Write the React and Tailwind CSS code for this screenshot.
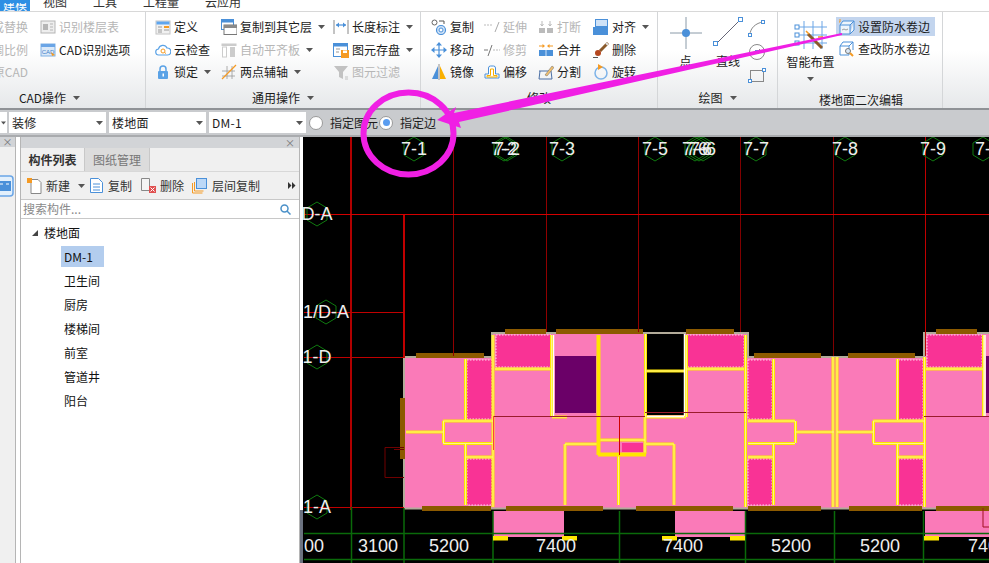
import React from "react";

const BLUE = "#4a90d9";
const ORANGE = "#f59a23";
const GRAY = "#b5b5b5";

const icons = {
  replace: <><rect x="1" y="2" width="14" height="12" fill="#eee" stroke={GRAY} /><rect x="3" y="5" width="5" height="6" fill={GRAY} /><path d="M10 5h3M10 8h3M10 11h3" stroke={GRAY} /></>,
  cadOption: <><rect x="1" y="2" width="14" height="12" fill="#dbe9f8" stroke="#7fb0e4" /><rect x="1" y="2" width="14" height="3" fill="#6aa5e6" /><text x="8" y="12" fontSize="6" textAnchor="middle" fill="#3f7fc8" fontFamily="Liberation Sans">CAD</text><path d="M11 10l4 3-3 1z" fill={ORANGE} /></>,
  define: <><rect x="1" y="2" width="14" height="13" fill="#f1f1f1" stroke="#c4c4c4" /><rect x="1.5" y="2.5" width="13" height="3" fill="#5ea5ee" /><rect x="9" y="7" width="5" height="2" fill={ORANGE} /><path d="M3 8h4M3 11h4M9 11h5M3 13h4" stroke="#999" /></>,
  cloud: <><path d="M4 13a3 3 0 0 1-.5-6 4.5 4.5 0 0 1 8.500-1 3.500 3.500 0 0 1 .5 7z" fill="#fff" stroke="#5aa2e6" strokeWidth="1.2" /><circle cx="8" cy="9" r="2" fill="none" stroke={ORANGE} /><path d="M9.500 10.500l1.500 1" stroke={ORANGE} /></>,
  lock: <><path d="M5 7V5a3 3 0 0 1 6 0v2" fill="none" stroke="#5aa2e6" strokeWidth="1.500" /><rect x="3" y="7" width="10" height="8" rx="1" fill="#5aa2e6" /><rect x="7.500" y="9.500" width="1.500" height="3" fill="#fff" /></>,
  copyFloor: <><rect x="0.500" y="0.500" width="12" height="10" fill="#fff" stroke="#4a90d9" /><rect x="0.500" y="0.500" width="12" height="3" fill="#4a90d9" /><rect x="3" y="6" width="13" height="9.500" fill="#fff" stroke="#777" /><rect x="3" y="6" width="13" height="3" fill="#8a8a8a" /></>,
  autoAlign: <><rect x="0.500" y="1.500" width="15" height="2.500" fill="#ccc" /><rect x="1.500" y="5" width="4" height="10" fill="#fff" stroke="#ccc" /><rect x="9" y="5" width="5" height="10" fill="#ccc" /></>,
  twoPoint: <><path d="M1 7h13M1 12h13M6 2v13M11 2v13" stroke="#999" strokeWidth="0.800" /><path d="M1 15L15 1" stroke={ORANGE} strokeWidth="1.200" /></>,
  length: <><path d="M1 1v14M15 1v14" stroke="#888" /><path d="M3 6h10" stroke={BLUE} strokeWidth="1.200" /><path d="M3 6l3-2.500v5zM13 6l-3-2.500v5z" fill={BLUE} /></>,
  save: <><rect x="0.500" y="1.500" width="14" height="13" fill="#fff" stroke={BLUE} /><rect x="0.500" y="1.500" width="14" height="3" fill={BLUE} /><path d="M3 7h4M3 10h3" stroke="#999" /><rect x="8" y="8" width="8" height="8" fill={ORANGE} /><rect x="10" y="8.500" width="4" height="2.500" fill="#fff" /></>,
  filter: <><path d="M1 2h14l-5 6v7l-4-2V8z" fill="#c2c2c2" /><path d="M12 13h3M12 15h3" stroke="#c2c2c2" /></>,
  copy: <><circle cx="3.500" cy="3.500" r="2.500" fill="#fff" stroke="#666" /><circle cx="10" cy="11" r="4.500" fill="#cfe2f7" stroke={BLUE} strokeWidth="1.200" /><circle cx="10" cy="11" r="2" fill="#fff" stroke={BLUE} /><path d="M8 2h5v3" fill="none" stroke="#555" /></>,
  extend: <><path d="M0 6h9" stroke="#bbb" strokeDasharray="2 1" /><path d="M11 13L15 3" stroke="#aaa" /></>,
  trim: <><path d="M0 8h4" stroke="#777" /><path d="M9 8h7" stroke="#bbb" strokeDasharray="2 1" /><path d="M4 14L8 3" stroke="#777" /></>,
  breakIcon: <><rect x="1" y="9" width="6" height="5" fill="#bbb" /><rect x="9" y="9" width="6" height="5" fill="#bbb" /><path d="M4 2v5M12 2v5" stroke="#bbb" /><path d="M2.500 5L4 7l1.500-2M10.500 5L12 7l1.500-2" fill="none" stroke="#bbb" /></>,
  merge: <><rect x="1" y="8" width="14" height="6" fill={BLUE} /><path d="M8 8v6" stroke="#cfe2f7" /><path d="M1 4h4M11 4h4" stroke={ORANGE} strokeWidth="1.200" /><path d="M7 4L4.500 2v4zM9 4l2.500-2v4z" fill={ORANGE} /></>,
  align: <><rect x="2.500" y="0.500" width="12" height="7" fill="#cfe2f7" stroke={BLUE} /><rect x="0" y="8" width="15" height="8" fill={BLUE} /></>,
  move: <><path d="M8 2v12M2 8h12" stroke={BLUE} strokeWidth="1.200" /><path d="M8 0l3 3.500H5zM8 16l3-3.500H5zM0 8l3.500-3v6zM16 8l-3.500-3v6z" fill={BLUE} /></>,
  erase: <><path d="M15 1L7 9" stroke="#8a5a2b" strokeWidth="3" /><path d="M13 1l2 2" stroke="#ddd" strokeWidth="2" /><circle cx="5" cy="11" r="3" fill="#b5471f" /><path d="M0 15.500h5" stroke="#555" /></>,
  mirror: <><path d="M7 2v13H1z" fill={BLUE} /><path d="M8 0v16" stroke="#777" strokeWidth="0.800" /><path d="M9 2v13h6z" fill="#f9b000" /></>,
  offset: <><path d="M1 14V10h3.500V4a2 2 0 0 1 2-2h3a2 2 0 0 1 2 2v6H15v4z" fill="#fff" stroke={BLUE} /><path d="M3 13v-1.500h3.500V5h3v6.500H13V13z" fill="none" stroke="#f9b000" /></>,
  split: <><path d="M1 7h12M2 7l-1 8h13l-1-8" fill="none" stroke="#4a6fa5" /><path d="M7 11L14 2l2 1.500L9 12z" fill="#f0c070" stroke="#666" strokeWidth="0.500" /></>,
  rotate: <><circle cx="8" cy="9" r="6" fill="none" stroke="#7db3e8" strokeWidth="1.500" /><path d="M5 0v6l5-3z" fill={ORANGE} /></>,
};

const Icon = ({ name }) => (
  <svg width="16" height="16" viewBox="0 0 16 16" className="shrink-0">
    {icons[name]}
  </svg>
);

const Caret = ({ className = "" }) => (
  <svg width="7" height="4" viewBox="0 0 7 4" className={`shrink-0 ${className}`}>
    <path d="M0 0h7L3.500 4z" fill="#555" />
  </svg>
);

const Item = ({ icon, label, caret, off, small }) => (
  <div className="flex h-[22.500px] items-center whitespace-nowrap">
    {icon && <span className={small ? "flex w-4 justify-end" : "flex"}><Icon name={icon} /></span>}
    <span className={`ml-[3px] ${off ? "text-[#b6b6b6]" : "text-[#1c1c1c]"}`}>{label}</span>
    {caret && <Caret className="ml-[6px]" />}
  </div>
);

const Group = ({ width, title, caret, children }) => (
  <div className={`flex shrink-0 flex-col border-r border-[#d4d6d8] ${width}`}>
    <div className="mt-1 flex h-[72px]">{children}</div>
    <div className="flex h-[22px] items-center justify-center gap-[7px] pt-[2px] text-[#1c1c1c]">
      {title}
      {caret && <Caret />}
    </div>
  </div>
);

const Select = ({ value, width }) => (
  <div className={`flex h-[21px] items-center justify-between bg-white pl-[3px] pr-[3px] ${width}`}>
    <span className="tracking-[0.300px] text-[#1c1c1c]">{value}</span>
    <Caret />
  </div>
);

const Radio = ({ on }) => (
  <span className="flex h-[14px] w-[14px] items-center justify-center rounded-full border border-[#9a9a9a] bg-white">
    {on && <span className="h-[7px] w-[7px] rounded-full bg-[#5a9df0]" />}
  </span>
);

const pink = "#fa7ab8";
const hot = "#f93395";

const axisLines = [
  [351, 137, 351, 510, "#b00000", 2],
  [404, 214, 404, 358, "#c00000", 2],
  [453.500, 137, 453.500, 356, "#900000", 1],
  [546.500, 137, 546.500, 332, "#900000", 1],
  [638.500, 137, 638.500, 332, "#900000", 1],
  [740.500, 137, 740.500, 332, "#800000", 1],
  [833.500, 137, 833.500, 356, "#800000", 1],
  [925.500, 137, 925.500, 356, "#c00000", 1],
  [304, 214.500, 989, 214.500, "#d40000", 1],
  [304, 312.500, 403, 312.500, "#c00000", 1],
  [304, 357.500, 404, 357.500, "#c00000", 1],
  [304, 507.500, 404, 507.500, "#c00000", 1],
];

const bubbles = [
  [414, 149, "7-1"], [504, 149, "7-2"], [507, 149, "7-2"], [562, 149, "7-3"], [655, 149, "7-5"],
  [695, 149, "7-6"], [699, 149, "7-6"], [703, 149, "7-6"], [756, 149, "7-7"], [845, 149, "7-8"],
  [933, 149, "7-9"], [983, 149, "7-"], [317, 214, "D-A"], [326, 312, "1/D-A"], [317, 357, "1-D"], [317, 507, "1-A"],
];

const hotRooms = [
  [496, 335, 55, 32], [467, 360, 25, 59], [467, 459, 25, 46], [687, 335, 57, 32], [748, 360, 24, 59],
  [748, 459, 24, 46], [898, 360, 25, 59], [898, 459, 25, 46], [927, 335, 55, 32],
];

const yellow = [
  "M406 432H443M443.500 421V443M443 421H493M443 443.500H493M465.500 359V420M465.500 443V505M466 457H493",
  "M493 335V507M495 369H552M551.500 335V416M552 417H567",
  "M599 440H645M645 417V454M618.500 455V505M565 444V505M565 444H597",
  "M645.500 334V417M646 371H684M645 417H686M686.500 335V417M687 369H744M745.500 335V507",
  "M646 444H674M674 444V505",
  "M748 421H795M795.500 421V443M748 443.500H795M795 432H834M773.500 359V420M773.500 443V505M748 457H773",
  "M833 357V507M837 357V507M837 432H874M873.500 421V443M873 421H924M873 443.500H924M897.500 359V420M897.500 443V505M897 457H924",
  "M924.500 357V507M926 369H983M983.500 335V417",
];

const brown = [
  [416, 353, 68, 5], [505, 329, 41, 5], [556, 329, 87, 5], [686, 329, 48, 5], [754, 353, 67, 5], [848, 353, 67, 5], [936, 329, 41, 5],
  [422, 506, 69, 5], [506, 506, 97, 5], [636, 506, 97, 5], [748, 506, 73, 5], [849, 506, 73, 5], [936, 506, 53, 5], [400, 398, 5, 61],
];

const Plan = () => (
  <svg viewBox="303 137 686 426" className="block h-[426px] w-[686px] bg-black">
    {/* floor slab */}
    <path d="M404 507V357H492V333H748V357H924V333H989V508H404z" fill={pink} />
    <rect x="493" y="511" width="71" height="26" fill={pink} />
    <rect x="675" y="511" width="70" height="26" fill={pink} />
    <rect x="925" y="511" width="64" height="26" fill={pink} />
    <rect x="646" y="334" width="38" height="81" fill="#000" />
    <rect x="555" y="356" width="41" height="57" fill="#6b0068" />
    <rect x="986" y="356" width="3" height="57" fill="#6b0068" />
    <rect x="622" y="443" width="21" height="9" fill={hot} />
    {hotRooms.map(([x, y, w, h]) => (
      <rect key={`${x}-${y}`} x={x} y={y} width={w} height={h} fill={hot} stroke="#ffd6ea" strokeDasharray="1.500 1.500" />
    ))}
    {/* walls */}
    <path d="M404 507V357H492V333H748V357H924V333H989M404 508.500H989" fill="none" stroke="#b3ab9a" strokeWidth="2" />
    {yellow.map((d) => (
      <path key={d} d={d} fill="none" stroke="#ffe600" strokeWidth="3" />
    ))}
    {yellow.map((d) => (
      <path key={d} d={d} fill="none" stroke="#fff58a" strokeWidth="1" />
    ))}
    <path d="M598.500 335V455M598 454.500H646" fill="none" stroke="#ffe600" strokeWidth="4" />
    <path d="M553.500 335V416M684.500 334V416M647 416.500H684M985 335V416" fill="none" stroke="#fff" strokeWidth="1.500" />
    {brown.map(([x, y, w, h]) => (
      <rect key={`${x}-${y}`} x={x} y={y} width={w} height={h} fill="#8c5a00" />
    ))}
    {/* axes */}
    {axisLines.map(([x1, y1, x2, y2, c, w]) => (
      <line key={`${x1}-${y1}-${x2}`} x1={x1} y1={y1} x2={x2} y2={y2} stroke={c} strokeWidth={w} />
    ))}
    <path d="M493 416.500H645M645 412.500H746M924 416.500H989" stroke="#9a1c2c" fill="none" />
    <path d="M619.500 416V455" stroke="#d00000" />
    <path d="M493.500 416V450" stroke="#ff4040" />
    <path d="M404 447.500H385V477.500H404M394 449.500H404" fill="none" stroke="#700000" />
    <path d="M983 508V527H989" fill="none" stroke="#a01020" />
    {/* dimension lines */}
    <path d="M304 533.500H989M304 559.500H989" stroke="#0a6a0a" strokeWidth="1.500" />
    <path d="M351.500 507V563M404 508V563M493 511V563M619.500 511V563M745.500 511V563M834.500 511V563M923.500 511V563" stroke="#0a6a0a" strokeWidth="1.500" />
    {[[493, 536], [562, 536], [662, 536], [730, 536], [924, 536]].map(([x, y]) => (
      <rect key={x} x={x} y={y} width="15" height="4.500" fill="#ffe600" />
    ))}
    {bubbles.map(([cx, cy, label], i) => (
      <g key={i}>
        <polygon
          points={`${cx},${cy - 12} ${cx + 10},${cy - 6} ${cx + 10},${cy + 6} ${cx},${cy + 12} ${cx - 10},${cy + 6} ${cx - 10},${cy - 6}`}
          fill="none"
          stroke="#0f7a0f"
        />
        <text x={cx} y={cy + 6} textAnchor="middle" fontSize="18" fill="#eee" fontFamily="Liberation Sans">{label}</text>
      </g>
    ))}
    {[[314, "00"], [378, "3100"], [449, "5200"], [556, "7400"], [683, "7400"], [791, "5200"], [880, "5200"], [988, "7400"]].map(([x, t]) => (
      <text key={x} x={x} y={552} textAnchor="middle" fontSize="18" fill="#eee" fontFamily="Liberation Sans">{t}</text>
    ))}
  </svg>
);

export default function App() {
  return (
    <div className="relative h-[563px] w-[989px] overflow-hidden bg-white text-[12px] leading-[16px] [font-family:'Noto_Sans_CJK_SC','Liberation_Sans',sans-serif]">
      {/* menu tabs */}
      <div className="flex h-[12px] overflow-hidden border-b border-[#d8d8d8]">
        <div className="flex h-[11px] w-[30px] items-end justify-end bg-[#2e8fe4] pr-[3px] leading-[12px] text-white">
          <span className="h-[8px] overflow-hidden"><span className="block -mt-[4px]">建模</span></span>
        </div>
        {[["视图", "ml-[13px]"], ["工具", "ml-[26px]"], ["工程量", "ml-[26px]"], ["云应用", "ml-[26px]"]].map(([t, m]) => (
          <span key={t} className={`${m} -mt-[4px] leading-[12px] text-[#333]`}>{t}</span>
        ))}
      </div>

      {/* ribbon */}
      <div className="flex h-[98px] border-b-2 border-[#8f9296] bg-gradient-to-b from-white from-40% to-[#e6e8ea]">
        <Group width="w-[146px]" title={<span className="-ml-[46px]">CAD操作</span>} caret>
          <div className="w-[40px]">
            {["成替换", "调比例", "原CAD"].map((t) => (
              <div key={t} className="flex h-[22.500px] w-[28px] items-center justify-end overflow-hidden whitespace-nowrap text-[#b6b6b6]">
                <span className="shrink-0">{t}</span>
              </div>
            ))}
          </div>
          <div>
            <Item icon="replace" label="识别楼层表" off />
            <Item icon="cadOption" label="CAD识别选项" />
          </div>
        </Group>

        <Group width="w-[275px]" title="通用操作" caret>
          <div className="w-[75px] pl-[9px]">
            <Item icon="define" label="定义" />
            <Item icon="cloud" label="云检查" />
            <Item icon="lock" label="锁定" caret small />
          </div>
          <div className="w-[112px]">
            <Item icon="copyFloor" label="复制到其它层" caret />
            <Item icon="autoAlign" label="自动平齐板" caret off />
            <Item icon="twoPoint" label="两点辅轴" caret />
          </div>
          <div>
            <Item icon="length" label="长度标注" caret />
            <Item icon="save" label="图元存盘" caret />
            <Item icon="filter" label="图元过滤" off />
          </div>
        </Group>

        <Group width="w-[237px]" title="修改">
          <div className="w-[63px] pl-[10px]">
            <Item icon="copy" label="复制" />
            <Item icon="move" label="移动" />
            <Item icon="mirror" label="镜像" />
          </div>
          <div className="w-[54px]">
            <Item icon="extend" label="延伸" off />
            <Item icon="trim" label="修剪" off />
            <Item icon="offset" label="偏移" />
          </div>
          <div className="w-[55px]">
            <Item icon="breakIcon" label="打断" off />
            <Item icon="merge" label="合并" />
            <Item icon="split" label="分割" />
          </div>
          <div>
            <Item icon="align" label="对齐" caret />
            <Item icon="erase" label="删除" />
            <Item icon="rotate" label="旋转" />
          </div>
        </Group>

        <Group width="w-[120px]" title="绘图" caret>
          <div className="flex w-[55px] flex-col items-center">
            <svg width="32" height="32" viewBox="0 0 32 32" className="mt-[1px]">
              <path d="M0 16h32M16 0v32" stroke="#8a9aa8" />
              <circle cx="16" cy="16" r="4" fill={BLUE} />
            </svg>
            <span className="mt-[4px] text-[#1c1c1c]">点</span>
          </div>
          <div className="flex w-[30px] flex-col items-center">
            <svg width="30" height="30" viewBox="0 0 30 30" className="mt-[1px]">
              <path d="M3 27L27 3" stroke="#667" />
              <rect x="0.500" y="24.500" width="4" height="4" fill="#fff" stroke={BLUE} />
              <rect x="25.500" y="0.500" width="4" height="4" fill="#fff" stroke={BLUE} />
            </svg>
            <span className="mt-[6px] text-[#1c1c1c]">直线</span>
          </div>
          <div className="ml-[5px] mt-[2px] flex flex-col">
            <svg width="18" height="68" viewBox="0 0 18 68">
              <path d="M2 17C2 10 8 5 15 4" fill="none" stroke="#888" />
              <rect x="0.500" y="15.500" width="3" height="3" fill="#fff" stroke={BLUE} />
              <rect x="13.500" y="2.500" width="3" height="3" fill="#fff" stroke={BLUE} />
              <circle cx="9" cy="34" r="7.500" fill="none" stroke="#888" />
              <path d="M9 34l3-3" stroke="#888" />
              <rect x="7.500" y="32.500" width="3" height="3" fill="#fff" stroke={BLUE} />
              <rect x="2.500" y="52.500" width="13" height="11" fill="none" stroke="#888" />
              <rect x="0.500" y="61.500" width="3" height="3" fill="#fff" stroke={BLUE} />
              <rect x="14.500" y="50.500" width="3" height="3" fill="#fff" stroke={BLUE} />
            </svg>
          </div>
        </Group>

        <Group width="w-[165px]" title={<span className="ml-[2px] pt-[3px]">楼地面二次编辑</span>}>
          <div className="flex w-[59px] flex-col items-center pl-[6px]">
            <svg width="34" height="32" viewBox="0 0 34 32" className="mt-[4px]">
              <path d="M10 1v28M19 1v28M28 1v28M3 7h30M3 15h30M3 23h30" stroke="#6aa5e6" />
              <path d="M14 14l14 14" stroke="#8a5a2b" strokeWidth="3" />
              <path d="M12 11l3 3M24 17h5" stroke={ORANGE} strokeWidth="1.500" />
              <rect x="1" y="5" width="4" height="4" fill="#fff" stroke={BLUE} />
              <rect x="1" y="13" width="4" height="4" fill="#fff" stroke={BLUE} />
              <rect x="1" y="21" width="4" height="4" fill="#fff" stroke={BLUE} />
            </svg>
            <span className="mt-[2px] whitespace-nowrap text-[#1c1c1c]">智能布置</span>
            <Caret className="mt-[7px]" />
          </div>
          <div>
            <div className="-ml-[1px] mt-[1px] flex h-[19px] w-[99px] items-center whitespace-nowrap bg-[#c3d5ee] pl-[3px]">
              <svg width="16" height="16" viewBox="0 0 16 16" className="shrink-0">
                <path d="M1 6h10v9H1zM1 6l3-4h11l-4 4M11 15l4-4V2" fill="#eef5fc" stroke={BLUE} />
                <path d="M3 11l2-1 2 1 2-1" fill="none" stroke="#777" strokeWidth="0.700" />
                <path d="M1 0v3H0" fill="none" stroke={ORANGE} />
              </svg>
              <span className="ml-[3px] text-[#1c1c1c]">设置防水卷边</span>
            </div>
            <div className="mt-[3px] flex h-[19px] items-center whitespace-nowrap pl-[2px]">
              <svg width="16" height="16" viewBox="0 0 16 16" className="shrink-0">
                <path d="M1 5h9v9H1zM1 5l3-4h10l-4 4M14 1v8" fill="#fff" stroke={BLUE} />
                <circle cx="9" cy="10" r="2.500" fill="#dbe9f8" stroke="#777" />
                <path d="M11 12l3 3" stroke={ORANGE} strokeWidth="2" />
              </svg>
              <span className="ml-[3px] text-[#1c1c1c]">查改防水卷边</span>
            </div>
          </div>
        </Group>
        <div className="flex-1" />
      </div>

      {/* selector bar */}
      <div className="flex h-[27px] items-center border-b-2 border-[#a9abae] bg-[#c9cbce]">
        <div className="flex h-[21px] w-[7px] items-center justify-end bg-white pr-[1px]"><Caret className="w-[5px]" /></div>
        <Select value="装修" width="ml-[2px] w-[97px]" />
        <Select value="楼地面" width="ml-[3px] w-[97px]" />
        <Select value="DM-1" width="ml-[3px] w-[97px]" />
        <span className="ml-[3px]"><Radio /></span>
        <span className="ml-[7px] text-[#1c1c1c]">指定图元</span>
        <span className="ml-[1px]"><Radio on /></span>
        <span className="ml-[7px] text-[#1c1c1c]">指定边</span>
      </div>

      {/* workspace */}
      <div className="flex h-[426px]">
        <div className="flex w-[16px] flex-col border-r border-[#b5b5b5] bg-[#f0f0f0]">
          <div className="flex h-[10px] items-center justify-center bg-[#d2d4d7] text-[10px] leading-[10px] text-[#777]">×</div>
          <svg width="15" height="22" viewBox="0 0 15 22" className="mt-[28px]">
            <rect x="-3" y="1" width="16" height="20" rx="3" fill="#e3f0fc" stroke="#6aa5e6" strokeWidth="1.500" />
            <rect x="-3" y="6" width="14" height="10" fill={BLUE} />
            <path d="M0 9h3M6 9h3" stroke="#fff" />
          </svg>
        </div>
        <div className="w-[4px]" />
        <div className="flex w-[280px] flex-col border-x border-[#b5b5b5]">
          <div className="flex h-[11px] shrink-0 items-center justify-end bg-[#d2d4d7] pr-[4px] text-[10px] leading-[10px] text-[#777]">×</div>
          <div className="flex h-[23px] shrink-0 bg-[#f0f0f0]">
            <span className="flex w-[64px] items-center justify-center border-r border-[#c8c8c8] font-bold text-[#333]">构件列表</span>
            <span className="flex w-[65px] items-center justify-center border-r border-[#c8c8c8] bg-[#dcdcdc] text-[#777]">图纸管理</span>
          </div>
          <div className="flex h-[28px] shrink-0 items-center border-t border-[#d8d8d8] bg-[#f0f0f0] pl-[6px] text-[#333]">
            <svg width="15" height="16" viewBox="0 0 15 16">
              <path d="M4 1.500h7l3 3v11H4z" fill="#fff" stroke="#888" />
              <path d="M0 0h5v5H0z" fill={ORANGE} />
            </svg>
            <span className="ml-[4px]">新建</span>
            <Caret className="ml-[8px]" />
            <svg width="13" height="15" viewBox="0 0 13 15" className="ml-[5px]">
              <path d="M0.500 0.500h8l4 4v10H.5z" fill="#fff" stroke={BLUE} />
              <path d="M3 6h7M3 9h7M3 12h7" stroke={BLUE} />
            </svg>
            <span className="ml-[5px]">复制</span>
            <svg width="15" height="15" viewBox="0 0 15 15" className="ml-[9px]">
              <path d="M0.500 0.500h8v12h-8z" fill="#f4f4f4" stroke="#888" />
              <rect x="8" y="8" width="7" height="7" fill="#e05050" />
              <path d="M9.500 9.500l4 4M13.500 9.500l-4 4" stroke="#fff" />
            </svg>
            <span className="ml-[4px]">删除</span>
            <svg width="15" height="16" viewBox="0 0 15 16" className="ml-[8px]">
              <path d="M0.500 5v10h10" fill="none" stroke={ORANGE} />
              <path d="M2.500 4v9h9" fill="none" stroke={ORANGE} />
              <rect x="4.500" y="0.500" width="10" height="10" fill="#bcd8f7" stroke={BLUE} />
            </svg>
            <span className="ml-[5px]">层间复制</span>
            <span className="ml-auto mr-[3px] flex">
              <svg width="8" height="7" viewBox="0 0 8 7"><path d="M0 0l3.500 3.500L0 7zM4 0l3.500 3.500L4 7z" fill="#333" /></svg>
            </span>
          </div>
          <div className="flex h-[20px] shrink-0 items-center justify-between border-y border-[#c8c8c8] bg-white pl-[2px] pr-[8px] text-[#8a8a8a]">
            <span>搜索构件...</span>
            <svg width="11" height="11" viewBox="0 0 11 11">
              <circle cx="4.500" cy="4.500" r="3.500" fill="none" stroke="#4a90c8" strokeWidth="1.500" />
              <path d="M7 7l3.500 3.500" stroke="#4a90c8" strokeWidth="1.500" />
            </svg>
          </div>
          <div className="flex-1 bg-white pl-[11px] pt-[6px] text-[#111]">
            <div className="flex h-[16px] items-center">
              <svg width="6" height="6" viewBox="0 0 6 6"><path d="M6 0v6H0z" fill="#444" /></svg>
              <span className="ml-[6px]">楼地面</span>
            </div>
            <div className="ml-[29px] mt-[5px] flex h-[21px] w-[43px] items-center bg-[#b3cdee] pl-[3px]">DM-1</div>
            <div className="ml-[32px] mt-[6px] flex flex-col gap-2">
              {["卫生间", "厨房", "楼梯间", "前室", "管道井", "阳台"].map((t) => (
                <div key={t} className="h-[16px]">{t}</div>
              ))}
            </div>
          </div>
        </div>
        <div className="flex w-[3px] flex-col justify-end bg-white">
          <div className="h-[53px] bg-[#6b7280]" />
        </div>
        <Plan />
      </div>

      {/* magenta markup on top of the screenshot */}
      <svg viewBox="0 0 989 563" className="pointer-events-none absolute left-0 top-0 h-[563px] w-[989px]">
        <ellipse cx="408.500" cy="133.500" rx="45" ry="41" fill="none" stroke="#f01fe4" strokeWidth="6" />
        <polygon points="437,120 456,107 454,113 842,33 842,35 459,122 461,128" fill="#f01fe4" />
      </svg>
    </div>
  );
}
